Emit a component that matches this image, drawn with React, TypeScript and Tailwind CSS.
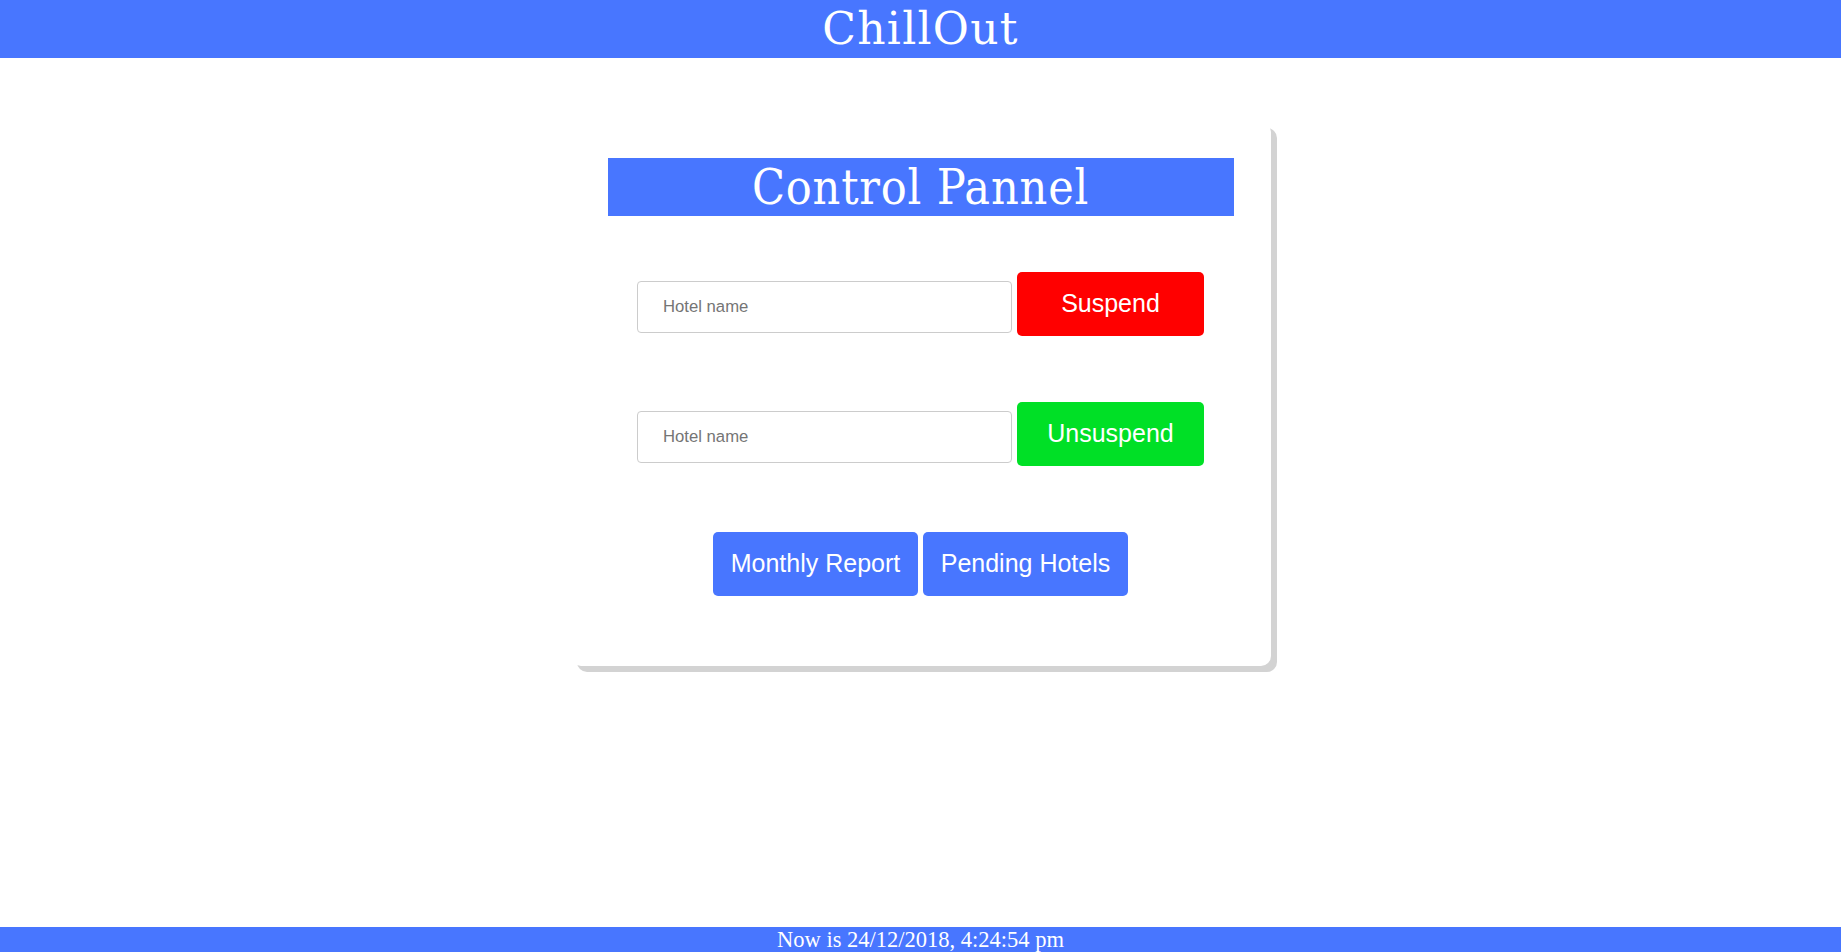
import React from "react";

const blue = "bg-[#4876ff]";

const SuspendRow = ({ label, color }: { label: string; color: string }) => (
  <div className="flex items-start justify-center gap-[5px]">
    <input
      type="text"
      placeholder="Hotel name"
      className="mt-[9px] w-[375px] h-[52px] border border-[#cccccc] rounded-[4px] pl-[25px] text-[16.7px] text-[#333] placeholder:text-[#757575] font-['Liberation_Sans',Arial,sans-serif] outline-none"
    />
    <button
      className={`w-[187px] h-[64px] rounded-[5px] text-[25px] text-white font-['Liberation_Sans',Arial,sans-serif] ${color}`}
    >
      {label}
    </button>
  </div>
);

export default function App() {
  return (
    <div className="min-h-screen bg-white">
      {/* Header */}
      <header className={`${blue} h-[58px] text-center`}>
        <h1 className="text-white text-[44px] leading-[58px] tracking-[1.25px] font-['DejaVu_Serif',serif]">
          ChillOut
        </h1>
      </header>

      {/* Control card */}
      <main className="pt-[64px]">
        <div className="mx-auto w-[700px] h-[544px] bg-white rounded-[10px] shadow-[6px_6px_0_#d3d3d3] px-[37px] pt-[36px]">
          <div className={`${blue} h-[58px] text-center`}>
            <h2 className="text-white text-[48px] leading-[58px] tracking-[0.8px] font-['DejaVu_Serif',serif] [font-stretch:condensed]">
              Control Pannel
            </h2>
          </div>

          <div className="mt-[56px] flex flex-col gap-[66px]">
            <SuspendRow label="Suspend" color="bg-[#ff0000]" />
            <SuspendRow label="Unsuspend" color="bg-[#00e026]" />
            <div className="flex justify-center gap-[5px]">
              <button className={`${blue} w-[205px] h-[64px] rounded-[5px] text-[25px] text-white font-['Liberation_Sans',Arial,sans-serif]`}>
                Monthly Report
              </button>
              <button className={`${blue} w-[205px] h-[64px] rounded-[5px] text-[25px] text-white font-['Liberation_Sans',Arial,sans-serif]`}>
                Pending Hotels
              </button>
            </div>
          </div>
        </div>
      </main>

      {/* Footer */}
      <footer className={`${blue} fixed bottom-0 left-0 right-0 h-[25px] text-center text-white text-[22.5px] leading-[25px] font-['Liberation_Serif','Times_New_Roman',serif]`}>
        Now is 24/12/2018, 4:24:54 pm
      </footer>
    </div>
  );
}
